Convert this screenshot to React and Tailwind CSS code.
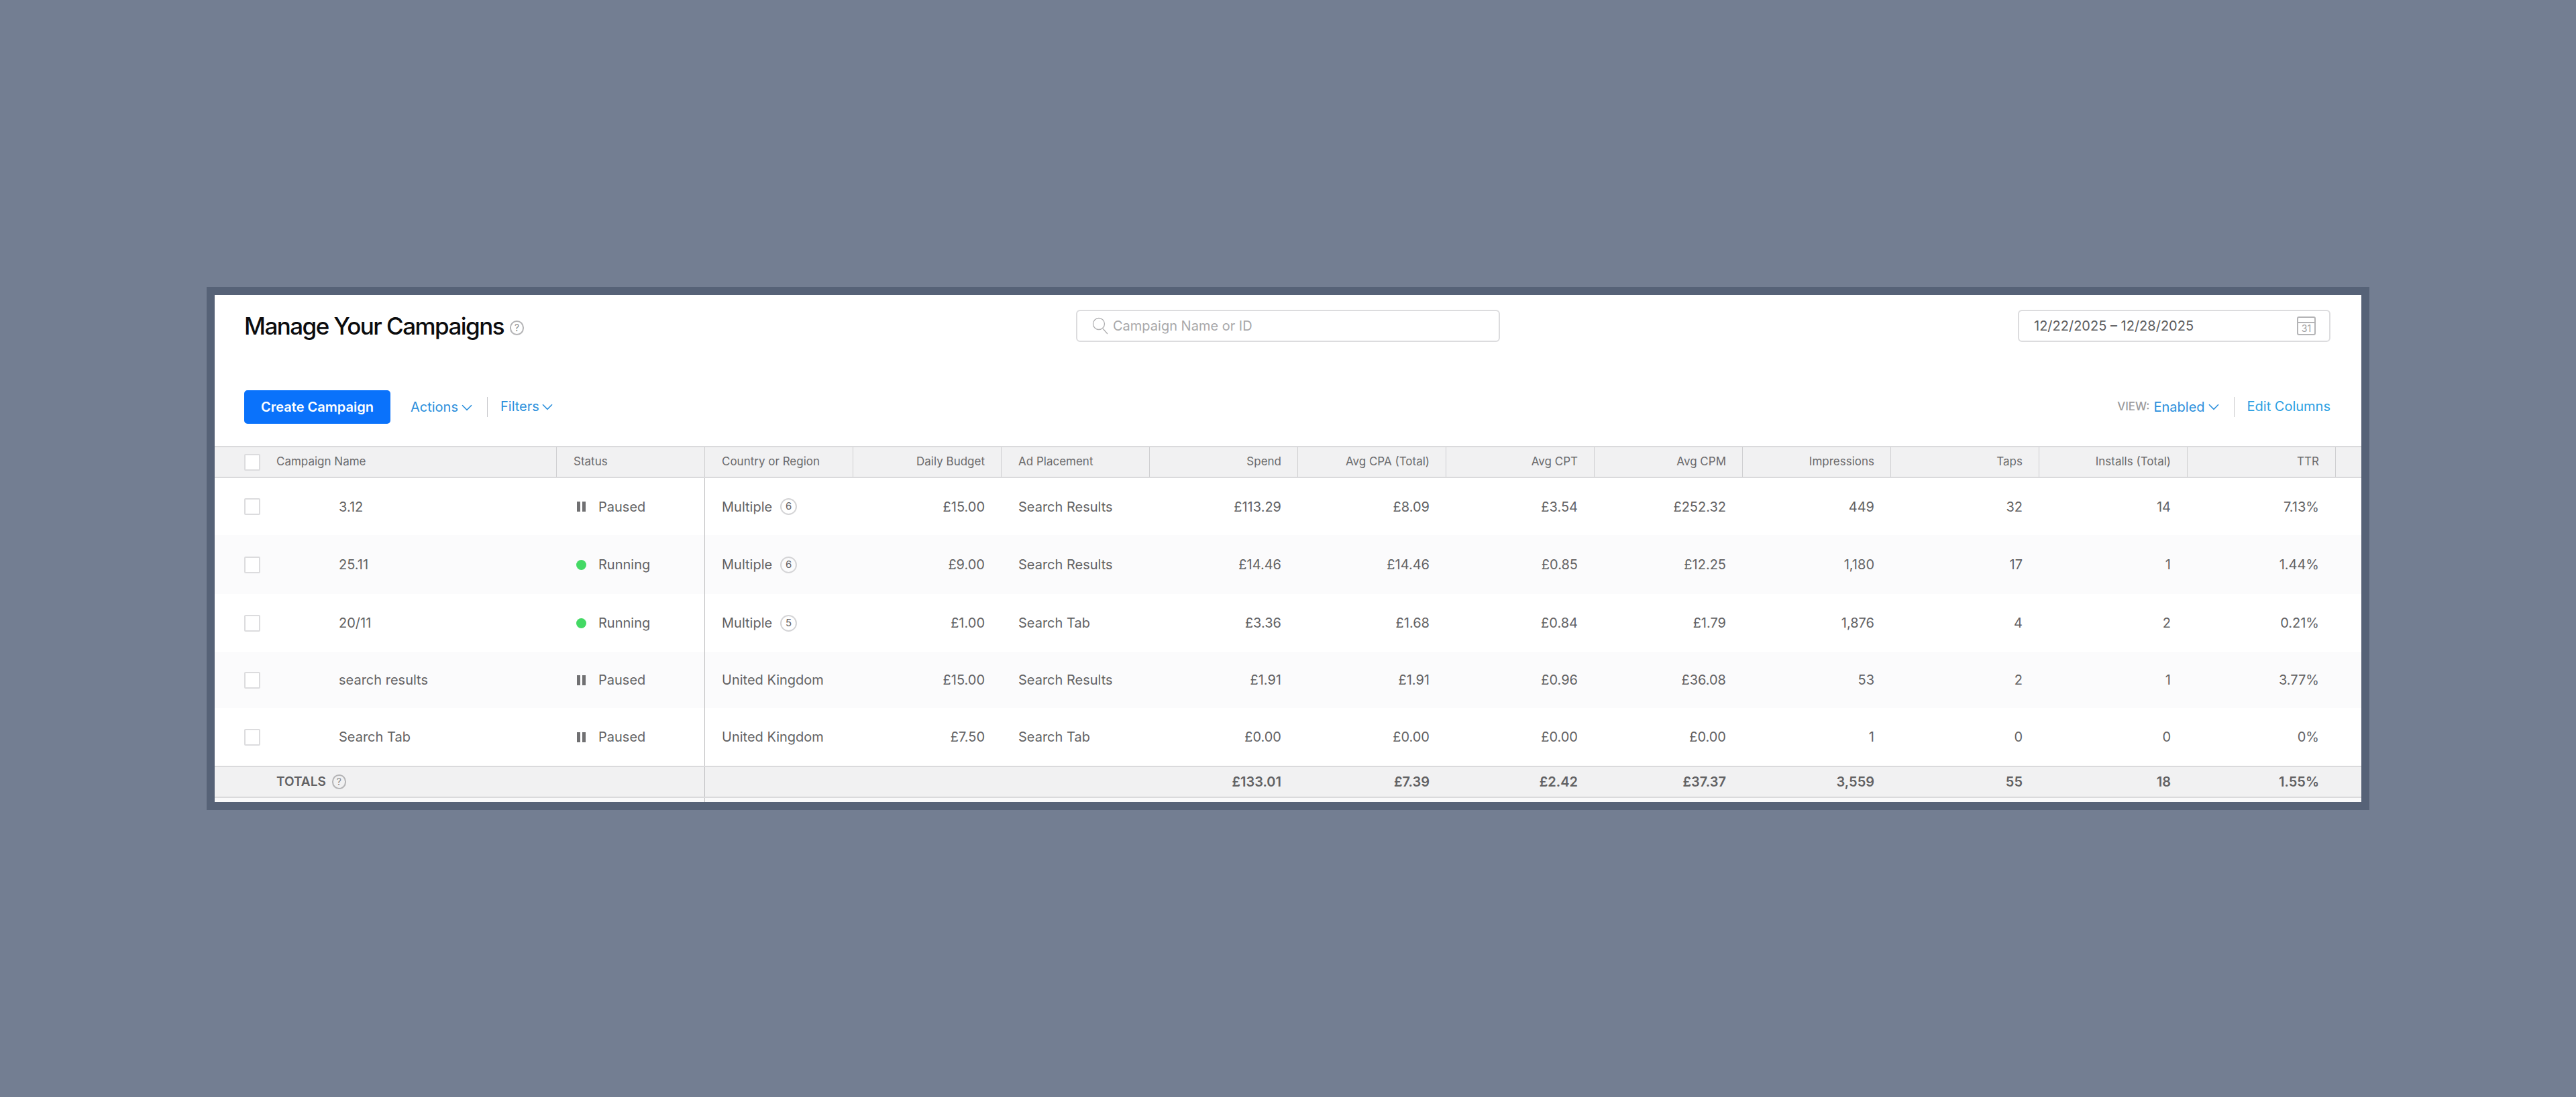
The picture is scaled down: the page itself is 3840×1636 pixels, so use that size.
import React from "react";

const rows = [
  { name: "3.12", status: "Paused", country: "Multiple", count: "6", budget: "£15.00", placement: "Search Results", nums: ["£113.29", "£8.09", "£3.54", "£252.32", "449", "32", "14", "7.13%"], h: "h-[85px]" },
  { name: "25.11", status: "Running", country: "Multiple", count: "6", budget: "£9.00", placement: "Search Results", nums: ["£14.46", "£14.46", "£0.85", "£12.25", "1,180", "17", "1", "1.44%"], h: "h-[88px]" },
  { name: "20/11", status: "Running", country: "Multiple", count: "5", budget: "£1.00", placement: "Search Tab", nums: ["£3.36", "£1.68", "£0.84", "£1.79", "1,876", "4", "2", "0.21%"], h: "h-[86px]" },
  { name: "search results", status: "Paused", country: "United Kingdom", budget: "£15.00", placement: "Search Results", nums: ["£1.91", "£1.91", "£0.96", "£36.08", "53", "2", "1", "3.77%"], h: "h-[84px]" },
  { name: "Search Tab", status: "Paused", country: "United Kingdom", budget: "£7.50", placement: "Search Tab", nums: ["£0.00", "£0.00", "£0.00", "£0.00", "1", "0", "0", "0%"], h: "h-[86px]" },
];

const numHeaders = ["Spend", "Avg CPA (Total)", "Avg CPT", "Avg CPM", "Impressions", "Taps", "Installs (Total)", "TTR"];
const totals = ["£133.01", "£7.39", "£2.42", "£37.37", "3,559", "55", "18", "1.55%"];

const gridCols = "grid grid-cols-[509px_repeat(12,221px)_39px]";

function Chevron({ className }) {
  return (
    <svg className={className} width="16" height="10" viewBox="0 0 16 10" fill="none" stroke="currentColor" strokeWidth="1.6">
      <path d="M1 1.2 L8 8.4 L15 1.2" />
    </svg>
  );
}

function Checkbox() {
  return <div className="w-[24px] h-[25px] bg-white border-2 border-[#dcdcde] rounded-[2px] shrink-0" />;
}

function HelpIcon({ className }) {
  return (
    <span className={`inline-flex items-center justify-center w-[21px] h-[22px] rounded-full border-2 border-[#b4b4b6] text-[14px] leading-none text-[#8a8a8c] ${className}`}>
      ?
    </span>
  );
}

function HeadCell({ children, right }) {
  return (
    <div className={`flex items-center border-l border-[#cfcfd1] ${right ? "justify-end pr-[24px]" : "pl-[25px]"}`}>
      {children}
    </div>
  );
}

function Status({ status }) {
  if (status === "Running") {
    return (
      <div className="flex items-center">
        <span className="w-[15px] h-[15px] rounded-full bg-[#43d964] ml-[-1px] mr-[18px]" />
        <span>Running</span>
      </div>
    );
  }
  return (
    <div className="flex items-center">
      <span className="flex gap-[3px] mr-[19px]">
        <span className="w-[5px] h-[15px] bg-[#707072]" />
        <span className="w-[5px] h-[15px] bg-[#707072]" />
      </span>
      <span>Paused</span>
    </div>
  );
}

export default function App() {
  return (
    <div className="h-[1636px] bg-[#737e92] pt-[428px] pl-[308px] font-['Inter',sans-serif] overflow-hidden">
      <div className="w-[3224px] h-[780px] border-[12px] border-[#566277] bg-white flex flex-col">
        {/* title bar */}
        <div className="h-[70px] mt-[22px] relative flex items-start justify-between pl-[44px] pr-[46px]">
          <div className="flex items-center h-[48px]">
            <h1 className="text-[35px] font-medium tracking-[-1.55px] text-[#0c0c0e]">Manage Your Campaigns</h1>
            <HelpIcon className="ml-[9px] mt-[6px]" />
          </div>
          <div className="absolute left-[1284px] top-0 w-[632px] h-[48px] border-2 border-[#dcdcde] rounded-[6px] flex items-center pl-[22px]">
            <svg width="24" height="26" viewBox="0 0 24 26" fill="none" stroke="#b0b0b2" strokeWidth="1.3">
              <ellipse cx="10" cy="10" rx="8.5" ry="8.5" />
              <path d="M16 17 L23 25" />
            </svg>
            <span className="ml-[7px] text-[20px] text-[#a8a8aa]">Campaign Name or ID</span>
          </div>
          <div className="w-[466px] h-[48px] border-2 border-[#dcdcde] rounded-[6px] flex items-center justify-between pl-[22px] pr-[20px]">
            <span className="text-[20px] text-[#5c5c5e]">12/22/2025 – 12/28/2025</span>
            <div className="w-[28px] h-[28px] border-2 border-[#b4b4b6] rounded-[3px] flex flex-col">
              <div className="h-[8px] border-b-2 border-[#b4b4b6]" />
              <div className="text-[14px] leading-[16px] text-center text-[#a0a0a2]">31</div>
            </div>
          </div>
        </div>

        {/* toolbar */}
        <div className="h-[133px] pt-[50px] flex items-start justify-between pl-[44px] pr-[46px]">
          <div className="flex items-center">
            <button className="w-[218px] h-[50px] bg-[#0a72fb] text-white text-[20px] font-semibold rounded-[5px]">
              Create Campaign
            </button>
            <span className="ml-[30px] text-[20px] text-[#2a8fdc]">Actions</span>
            <Chevron className="ml-[5px] mt-[2px] text-[#2a8fdc]" />
            <span className="ml-[22px] w-px h-[30px] bg-[#c8c8cb]" />
            <span className="ml-[19px] text-[20px] text-[#2a8fdc] mt-[-3px]">Filters</span>
            <Chevron className="ml-[4px] text-[#2a8fdc]" />
          </div>
          <div className="flex items-center h-[50px]">
            <span className="text-[17px] font-medium text-[#9b9b9d]">VIEW:</span>
            <span className="ml-[6px] text-[20px] text-[#2a8fdc]">Enabled</span>
            <Chevron className="ml-[5px] text-[#2a8fdc]" />
            <span className="ml-[22px] w-px h-[30px] bg-[#c8c8cb]" />
            <span className="ml-[19px] text-[20px] text-[#2ba0e2] mt-[-3px]">Edit Columns</span>
          </div>
        </div>

        {/* header row */}
        <div className={`${gridCols} h-[48px] bg-[#f1f1f2] border-y-2 border-[#dadadc] text-[17px] text-[#6a6a6c]`}>
          <div className="flex items-center pl-[44px]">
            <Checkbox />
            <span className="ml-[24px]">Campaign Name</span>
          </div>
          <HeadCell>Status</HeadCell>
          <HeadCell>Country or Region</HeadCell>
          <HeadCell right>Daily Budget</HeadCell>
          <HeadCell>Ad Placement</HeadCell>
          {numHeaders.map((h) => (
            <HeadCell right key={h}>{h}</HeadCell>
          ))}
          <HeadCell />
        </div>

        {/* body rows */}
        {rows.map((r, i) => (
          <div key={r.name} className={`${gridCols} ${r.h} text-[20px] text-[#626264] ${i % 2 ? "bg-[#fbfbfc]" : "bg-white"}`}>
            <div className="flex items-center pl-[44px]">
              <Checkbox />
              <span className="ml-[117px]">{r.name}</span>
            </div>
            <div className="flex items-center pl-[31px]">
              <Status status={r.status} />
            </div>
            <div className="flex items-center pl-[25px] border-l border-[#c0c0c2]">
              <span>{r.country}</span>
              {r.count && (
                <span className="ml-[12px] w-[25px] h-[25px] rounded-full border-2 border-[#d4d4d6] flex items-center justify-center text-[15px]">
                  {r.count}
                </span>
              )}
            </div>
            <div className="flex items-center justify-end pr-[24px]">{r.budget}</div>
            <div className="flex items-center pl-[26px]">{r.placement}</div>
            {r.nums.map((n, j) => (
              <div key={j} className="flex items-center justify-end pr-[24px]">{n}</div>
            ))}
          </div>
        ))}

        {/* totals */}
        <div className={`${gridCols} h-[48px] bg-[#f1f1f2] border-y-2 border-[#dadadc] text-[20px] font-semibold text-[#626264]`}>
          <div className="flex items-center pl-[92px] text-[19px]">
            TOTALS
            <HelpIcon className="ml-[9px] font-normal" />
          </div>
          <div />
          <div className="border-l border-[#c0c0c2] col-span-3" />
          {totals.map((t) => (
            <div key={t} className="flex items-center justify-end pr-[24px]">{t}</div>
          ))}
        </div>
        <div className={`${gridCols} grow bg-[#f9f9fa]`}>
          <div className="col-span-2" />
          <div className="border-l border-[#c0c0c2]" />
        </div>
      </div>
    </div>
  );
}
